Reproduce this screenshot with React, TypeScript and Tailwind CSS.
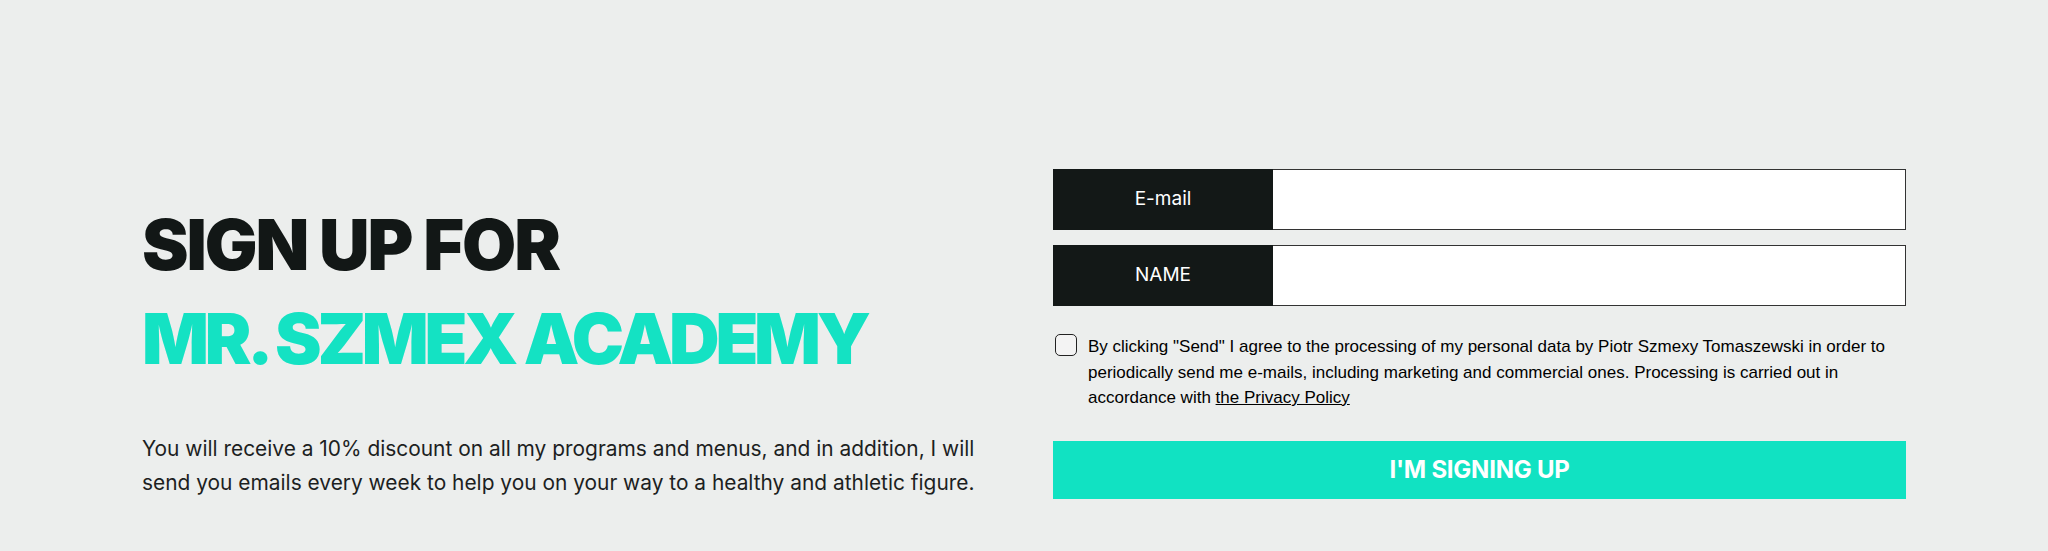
import { useState } from 'react';

export default function App() {
  const [agreed, setAgreed] = useState(false);

  return (
    <div className="min-h-[551px] w-full bg-[#eceeed] font-['Inter',sans-serif]">
      <div className="mx-[142px] grid grid-cols-2 gap-[58px] pt-[169px] pb-[55px]">
        {/* Left: heading + copy */}
        <div className="pt-[29px]">
          <h1 className="text-[70px] leading-[94px] font-black uppercase">
            <span className="block tracking-[-0.03em] text-[#121716]">Sign up for</span>
            <span className="block tracking-[-0.06em] text-[#14e2c3]">Mr. Szmex Academy</span>
          </h1>
          <p className="mt-[46px] max-w-[860px] text-[20.9px] leading-[34px] text-[#1d1f1f]">
            You will receive a 10% discount on all my programs and menus, and in addition, I will
            send you emails every week to help you on your way to a healthy and athletic figure.
          </p>
        </div>

        {/* Right: form */}
        <form className="flex flex-col" onSubmit={(e) => e.preventDefault()}>
          <div className="flex h-[61px]">
            <label className="flex w-[220px] items-center justify-center bg-[#131817] text-[19px] text-white">
              E-mail
            </label>
            <input type="email" className="flex-1 border-[1.5px] border-l-0 border-[#333] bg-white outline-none" />
          </div>
          <div className="mt-[15px] flex h-[61px]">
            <label className="flex w-[220px] items-center justify-center bg-[#131817] text-[19px] text-white">
              NAME
            </label>
            <input type="text" className="flex-1 border-[1.5px] border-l-0 border-[#333] bg-white outline-none" />
          </div>

          <div className="mt-[28px] flex items-start gap-[11px] pl-[2px]">
            <button
              type="button"
              onClick={() => setAgreed(!agreed)}
              className="h-[22px] w-[22px] shrink-0 rounded-[5px] border-[1.5px] border-[#222] bg-[#f3f3f3]"
            >
              {agreed && <span className="block text-[14px] leading-none text-[#131817]">✓</span>}
            </button>
            <p className="font-['Liberation_Sans',Arial,sans-serif] text-[17px] leading-[25.5px] text-black">
              By clicking "Send" I agree to the processing of my personal data by Piotr Szmexy Tomaszewski in order to
              periodically send me e-mails, including marketing and commercial ones. Processing is carried out in
              accordance with <a className="underline">the Privacy Policy</a>
            </p>
          </div>

          <button
            type="submit"
            className="mt-[30px] h-[58px] w-full bg-[#11e2c2] text-[24px] font-bold tracking-[-0.01em] text-white uppercase"
          >
            I'm signing up
          </button>
        </form>
      </div>
    </div>
  );
}
